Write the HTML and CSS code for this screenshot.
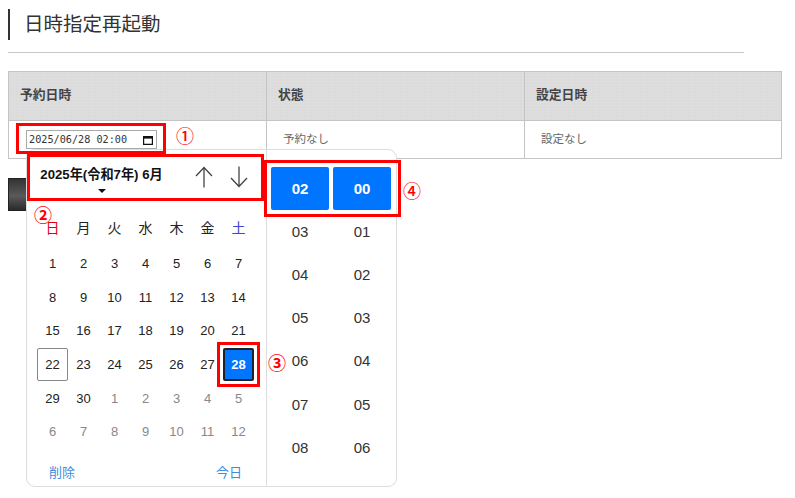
FILE: index.html
```html
<!DOCTYPE html>
<html lang="ja">
<head>
  <meta charset="UTF-8">
  <title>日時指定再起動</title>
  <link rel="stylesheet" href="styles.css">
</head>
<body>
  <h1 class="title">日時指定再起動</h1>

  <table class="schedule">
    <tr>
      <th class="col">予約日時</th>
      <th class="col">状態</th>
      <th>設定日時</th>
    </tr>
    <tr>
      <td>
        <div class="date-input">
          <span>2025/06/28 02:00</span>
          <svg width="10" height="10" viewBox="0 0 10 10"><path d="M.6 1.600h8.800v7.800h-8.800z" fill="none" stroke="#111" stroke-width="1.200"/><rect x="1" y="1" width="8" height="2.600" fill="#111"/></svg>
        </div>
      </td>
      <td class="plain">予約なし</td>
      <td class="plain">設定なし</td>
    </tr>
  </table>

  <button class="run-button"></button>

  <div class="picker">
    <div class="calendar">
      <div class="cal-head">
        <div class="month">
          <span>2025年(令和7年) 6月</span>
          <i class="caret"></i>
        </div>
        <svg class="arrow" width="18" height="22" viewBox="0 0 18 22"><path d="M9 1.500v20 M1 10l8-8.500 8 8.500" fill="none" stroke="#444" stroke-width="1.300"/></svg>
        <svg class="arrow" width="18" height="22" viewBox="0 0 18 22"><path d="M9 .5v20 M1 12l8 8.500 8-8.500" fill="none" stroke="#444" stroke-width="1.300"/></svg>
      </div>
      <div class="days">
        <div class="dow sun">日</div><div class="dow">月</div><div class="dow">火</div><div class="dow">水</div><div class="dow">木</div><div class="dow">金</div><div class="dow sat">土</div>
        <div>1</div><div>2</div><div>3</div><div>4</div><div>5</div><div>6</div><div>7</div>
        <div>8</div><div>9</div><div>10</div><div>11</div><div>12</div><div>13</div><div>14</div>
        <div>15</div><div>16</div><div>17</div><div>18</div><div>19</div><div>20</div><div>21</div>
        <div class="today">22</div><div>23</div><div>24</div><div>25</div><div>26</div><div>27</div><div class="selected">28</div>
        <div>29</div><div>30</div><div class="off">1</div><div class="off">2</div><div class="off">3</div><div class="off">4</div><div class="off">5</div>
        <div class="off">6</div><div class="off">7</div><div class="off">8</div><div class="off">9</div><div class="off">10</div><div class="off">11</div><div class="off">12</div>
      </div>
      <div class="cal-foot">
        <a>削除</a>
        <a>今日</a>
      </div>
    </div>
    <div class="times">
      <div class="time-col">
        <div class="on">02</div><div>03</div><div>04</div><div>05</div><div>06</div><div>07</div><div>08</div>
      </div>
      <div class="time-col">
        <div class="on">00</div><div>01</div><div>02</div><div>03</div><div>04</div><div>05</div><div>06</div>
      </div>
    </div>
  </div>

  <!-- annotations -->
  <div class="mark mark-1"></div>
  <div class="mark mark-2"></div>
  <div class="mark mark-3"></div>
  <div class="mark mark-4"></div>
  <span class="num num-1">①</span>
  <span class="num num-2">②</span>
  <span class="num num-3">③</span>
  <span class="num num-4">④</span>
</body>
</html>
```

FILE: styles.css
```css
html, body {
  height: 100%;
  overflow: hidden;
}
body {
  margin: 0;
  padding: 9px 13px 0 8px;
  box-sizing: border-box;
  position: relative;
  background: #fff;
  color: #333;
  font-family: "Liberation Sans", "Noto Sans CJK JP", sans-serif;
}
.title {
  width: 736px;
  height: 44px;
  margin: 0 0 18px;
  box-sizing: border-box;
  border-bottom: 1px solid #c8c8c8;
  font-size: 19.5px;
  font-weight: normal;
  line-height: 30px;
  color: #333;
  background: linear-gradient(#333, #333) no-repeat 0 0 / 2px 31px;
  padding-left: 16px;
}
.schedule {
  width: 774px;
  table-layout: fixed;
  border-collapse: collapse;
}
.schedule th, .schedule td {
  border: 1px solid #c4c4c4;
  text-align: left;
}
.schedule th {
  height: 49px;
  padding: 0 0 5px 11px;
  box-sizing: border-box;
  background-color: #dedede;
  background-image: radial-gradient(#d2d2d2 0.5px, transparent 0.6px);
  background-size: 3px 3px;
  font-size: 12.8px;
  font-weight: bold;
  color: #444;
}
.schedule th.col {
  width: 258px;
}
.schedule td {
  height: 38px;
  padding: 0 0 0 17px;
  box-sizing: border-box;
  font-size: 11.500px;
  color: #666;
}
.date-input {
  width: 131px;
  height: 19px;
  box-sizing: border-box;
  border: 1px solid #aaa;
  padding: 0 3px 0 2px;
  display: flex;
  align-items: center;
  justify-content: space-between;
  font-family: "DejaVu Sans Mono", monospace;
  font-size: 10.2px;
  color: #333;
}
.schedule td.plain {
  padding: 0 0 3px 16px;
}
.run-button {
  display: block;
  width: 120px;
  height: 33px;
  margin-top: 19px;
  border: 1px solid #222;
  background: linear-gradient(#333, #5a5a5a 55%, #2a2a2a);
}
.picker {
  position: absolute;
  left: 26px;
  top: 149px;
  width: 371px;
  height: 338px;
  box-sizing: border-box;
  display: flex;
  background: #fff;
  border: 1.5px solid #ddd;
  border-radius: 9px;
  overflow: hidden;
}
.calendar {
  width: 240px;
  box-sizing: border-box;
  border-right: 1px solid #ddd;
  display: flex;
  flex-direction: column;
}
.cal-head {
  height: 61px;
  box-sizing: border-box;
  padding: 14px 0 0 12.500px;
  display: flex;
  align-items: flex-start;
}
.month {
  width: 124px;
  margin-right: 31px;
  font-size: 13.200px;
  font-weight: bold;
  color: #111;
  text-align: center;
  white-space: nowrap;
}
.caret {
  display: block;
  width: 0;
  margin: 6px auto 0;
  border-left: 4px solid transparent;
  border-right: 4px solid transparent;
  border-top: 4px solid #111;
}
.arrow {
  margin-right: 17px;
  margin-top: 2px;
}
.days {
  display: grid;
  grid-template-columns: repeat(7, 31px);
  grid-template-rows: 36px repeat(6, 33.6px);
  padding-left: 10px;
  font-size: 13px;
  color: #222;
}
.days div {
  display: flex;
  align-items: center;
  justify-content: center;
  box-sizing: border-box;
}
.days .dow {
  align-items: flex-start;
  font-size: 14px;
  line-height: 34px;
}
.days .sun { color: #e60012; }
.days .sat { color: #4444cc; }
.days .off { color: #888; }
.days .today {
  border: 1px solid #888;
  border-radius: 2px;
}
.days .selected {
  background: #0075ff;
  color: #fff;
  font-weight: bold;
  border: 2px solid #222;
  border-radius: 2px;
}
.cal-foot {
  margin-top: auto;
  padding: 0 24px 5px 22px;
  display: flex;
  justify-content: space-between;
  font-size: 13px;
  color: #3b8ede;
}
.times {
  flex: 1;
  display: flex;
  gap: 4px;
  padding: 16.500px 0 0 4px;
  overflow: hidden;
}
.time-col {
  width: 58px;
}
.time-col div {
  height: 43.2px;
  display: flex;
  align-items: center;
  justify-content: center;
  font-size: 15px;
  color: #333;
}
.time-col .on {
  background: #0075ff;
  color: #fff;
  font-weight: bold;
  border-radius: 2px;
}
.mark {
  position: absolute;
  box-sizing: border-box;
  border: 3px solid #f00;
}
.mark-1 { left: 16px; top: 123px; width: 150px; height: 31px; }
.mark-2 { left: 27px; top: 154px; width: 237px; height: 47px; }
.mark-3 { left: 217px; top: 342px; width: 43px; height: 45px; }
.mark-4 { left: 264px; top: 160px; width: 137px; height: 57px; }
.num {
  position: absolute;
  color: #f00;
  font-family: "Noto Sans CJK JP", sans-serif;
  font-size: 18px;
  line-height: 16px;
  font-weight: 700;
}
.num-1 { left: 176px; top: 127px; font-weight: 500; }
.num-2 { left: 34px; top: 206px; }
.num-3 { left: 268px; top: 354px; }
.num-4 { left: 403px; top: 182px; font-weight: 500; }
```
